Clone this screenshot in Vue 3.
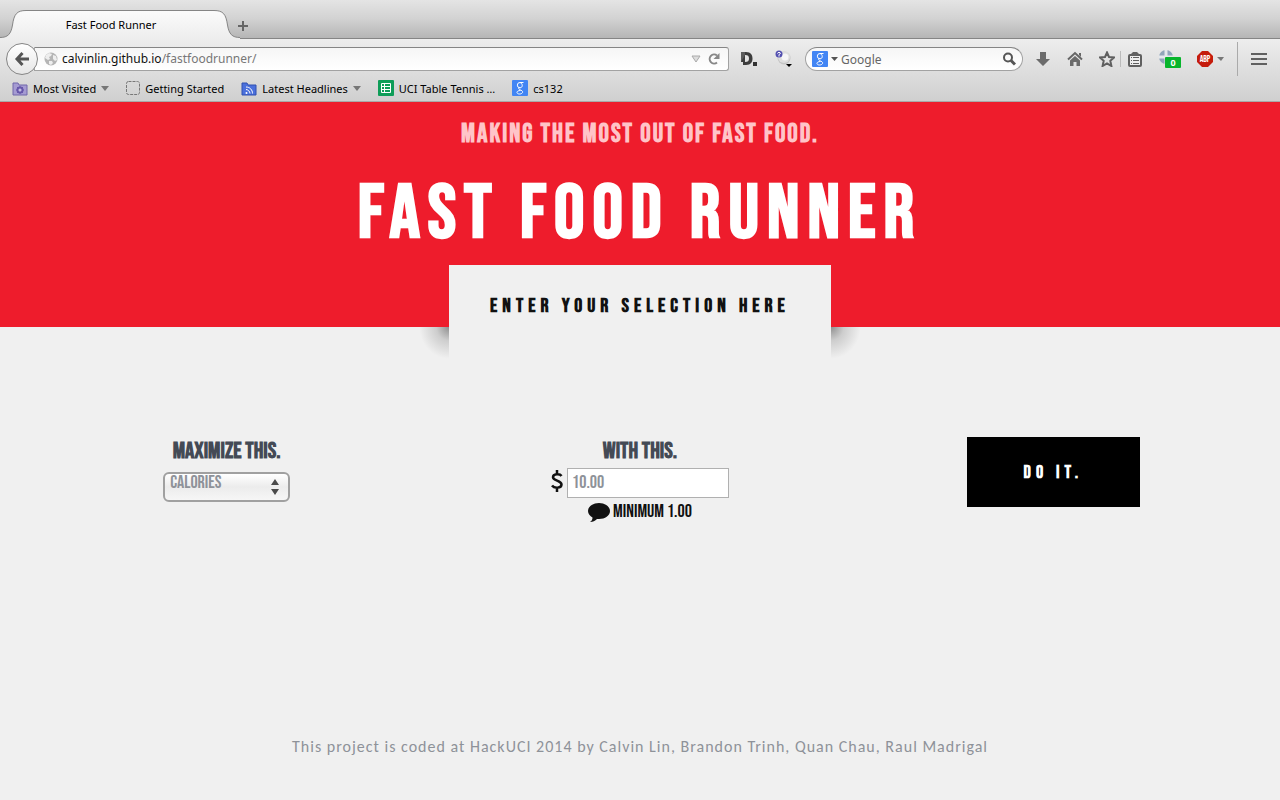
<script setup>
import { ref } from 'vue'

const url = ref('')
const search = ref('')
const nutrient = ref('calories')
const budget = ref('')
</script>

<template>
  <div class="browser">
    <div class="chrome">
      <div class="tabs">
        <a class="tab" href="#">
          <svg class="tab-shape" viewBox="0 0 240 30" width="240" height="30">
            <defs>
              <linearGradient id="tabFill" x1="0" y1="0" x2="0" y2="1">
                <stop offset="0" stop-color="#fbfbfb" />
                <stop offset="1" stop-color="#ededed" />
              </linearGradient>
            </defs>
            <path d="M0 30V28.500C8 28.500 11 25 12.500 16C14 5 17 1.500 26 1.500H214C223 1.500 226 5 227.500 16C229 25 232 28.500 240 28.500V30Z" fill="url(#tabFill)" />
            <path d="M0 28.500C8 28.500 11 25 12.500 16C14 5 17 1.500 26 1.500H214C223 1.500 226 5 227.500 16C229 25 232 28.500 240 28.500" fill="none" stroke="#858585" />
          </svg>
          <span>Fast Food Runner</span>
        </a>
        <button class="icon new-tab" aria-label="New tab">
          <svg width="12" height="12" viewBox="0 0 12 12"><path d="M6 1v10M1 6h10" stroke="#666" stroke-width="2" /></svg>
        </button>
      </div>

      <div class="nav">
        <button class="back" aria-label="Back">
          <svg width="16" height="16" viewBox="0 0 16 16"><path d="M8.500 2L3 8l5.500 6M3 8h12" fill="none" stroke="#555" stroke-width="3" /></svg>
        </button>
        <div class="address">
          <svg width="14" height="14" viewBox="0 0 14 14">
            <circle cx="7" cy="7" r="6.500" fill="#b5b5b5" />
            <path d="M2 3l3-2 3 1-1 2-2 1 1 2-2 1-3-2zM9 3l3 1 1 4-2 1-2-2zM5 9l3 0 1 2-2 2-2-1z" fill="#eee" />
          </svg>
          <label class="address-text">
            <span>calvinlin.github.io<i>/fastfoodrunner/</i></span>
            <input v-model="url" type="text" aria-label="Address">
          </label>
          <svg width="10" height="8" viewBox="0 0 10 8"><path d="M1 1h8L5 7z" fill="#ddd" stroke="#aaa" /></svg>
          <button class="icon" aria-label="Reload">
            <svg width="14" height="14" viewBox="0 0 14 14"><path d="M10 10.500A4.500 4.500 0 1 1 10 3.500" fill="none" stroke="#888" stroke-width="2" /><path d="M12.500 1v6h-6z" fill="#888" /></svg>
          </button>
        </div>
        <button class="icon dashlane" aria-label="Dictionary">
          <svg width="18" height="16" viewBox="0 0 18 16">
            <path fill-rule="evenodd" d="M1 1h5c5 0 6.500 3 6.500 6.500S11 14 6 14H3v-3H1zM5 4v7c3 0 4-1 4-3.500S8 4 5 4z" fill="#3d3d3d" />
            <path d="M1 1h4v3L1 11z" fill="#5c5c5c" /><rect x="13" y="11" width="4" height="4" fill="#333" />
          </svg>
        </button>
        <button class="icon orb" aria-label="Page tools">
          <svg width="18" height="18" viewBox="0 0 18 18">
            <circle cx="9" cy="8" r="6.500" fill="#c4c4c4" /><circle cx="9" cy="7" r="6" fill="#dedede" /><circle cx="10" cy="7" r="3.500" fill="#f6f6f6" />
            <circle cx="4" cy="4" r="3.500" fill="#5350b0" /><path d="M2.500 3.500C2.500 2 5.500 2 5.500 3.500L4 4.500v2" fill="none" stroke="#fff" />
            <path d="M11 14h6l-3 3z" fill="#000" />
          </svg>
        </button>
        <div class="search">
          <svg width="16" height="16" viewBox="0 0 16 16">
            <rect width="16" height="16" rx="1" fill="#4285f4" />
            <path d="M11.500 2.500H8a2.500 2.500 0 1 0 0 5.300c3 0 3-4.500 0-5.300M7.500 7.800c-2 1 0 1.700 1.500 2.400 3 1.300 1.500 3.800-1.500 3.800-3.500 0-3.500-3.500 1-3.500" fill="none" stroke="#fff" />
          </svg>
          <svg width="7" height="5" viewBox="0 0 7 5"><path d="M0 0h7L3.500 4z" fill="#555" /></svg>
          <input v-model="search" type="text" placeholder="Google" aria-label="Search">
          <button class="icon" aria-label="Go">
            <svg width="14" height="14" viewBox="0 0 14 14"><circle cx="6" cy="5.500" r="4" fill="none" stroke="#555" stroke-width="2" /><path d="M9 8.500l4 4" stroke="#555" stroke-width="3" /></svg>
          </button>
        </div>
        <div class="tools">
          <button class="icon" aria-label="Downloads">
            <svg width="16" height="16" viewBox="0 0 16 16"><path d="M5 1h6v7h4l-7 7-7-7h4z" fill="#6b6b6b" /></svg>
          </button>
          <button class="icon" aria-label="Home">
            <svg width="16" height="16" viewBox="0 0 16 16"><path d="M1 8.500L8 2l7 6.500" fill="none" stroke="#666" stroke-width="2" /><path d="M12 2h2v4l-2-2z" fill="#666" /><path d="M3 9.500L8 5l5 4.500V15H9.500v-4h-3v4H3z" fill="#6b6b6b" /></svg>
          </button>
          <button class="icon" aria-label="Bookmark">
            <svg width="16" height="16" viewBox="0 0 16 16"><path d="M8 1.500l2 4.500 5 .5-3.700 3.300L12.400 15 8 12.400 3.600 15l1.100-5.200L1 6.500 6 6z" fill="none" stroke="#606060" stroke-width="2" /></svg>
          </button>
          <button class="icon list" aria-label="Bookmarks menu">
            <svg width="16" height="16" viewBox="0 0 16 16"><rect x="2" y="4" width="12" height="11" rx="1" fill="#eee" stroke="#606060" stroke-width="2" /><path d="M4 3l2-2h4l2 2v1H4z" fill="#606060" /><path d="M4 6.500h1M6 6.500h6M4 9.500h1M6 9.500h6M4 12.500h1M6 12.500h6" stroke="#606060" /></svg>
          </button>
          <button class="icon" aria-label="Blocked items">
            <svg width="22" height="18" viewBox="0 0 22 18"><circle cx="7" cy="7" r="7" fill="#91a5ba" /><path d="M7 0v14M0 7h14" stroke="#e4e8ec" stroke-width="3" /><rect x="6" y="7" width="16" height="11" rx="1" fill="#08b52c" /><text x="14" y="16" fill="#fff" font-size="9" font-weight="700" text-anchor="middle">0</text></svg>
          </button>
          <button class="icon abp" aria-label="Adblock">
            <svg width="28" height="16" viewBox="0 0 28 16"><path d="M5 0h6l5 5v6l-5 5H5l-5-5V5z" fill="#c51c0c" /><text class="abp-text" x="8" y="11" fill="#fff" font-size="9" text-anchor="middle">ABP</text><path d="M20 6h7l-3 4z" fill="#777" /></svg>
          </button>
          <button class="icon menu" aria-label="Menu">
            <svg width="16" height="14" viewBox="0 0 16 14"><path d="M0 2h16M0 7h16M0 12h16" stroke="#606060" stroke-width="2" /></svg>
          </button>
        </div>
      </div>

      <div class="bookmarks">
        <a href="#">
          <svg width="16" height="15" viewBox="0 0 16 15"><path d="M1 2h5l1 2h8v10H1z" fill="#a59bd2" stroke="#7166aa" /><circle cx="8" cy="9" r="2.500" fill="none" stroke="#6757aa" stroke-width="2" /><path d="M8 5v8M4 9h8M5 6l6 6M11 6l-6 6" stroke="#6757aa" /><circle cx="8" cy="9" r="1.500" fill="#c3bce3" /></svg>
          <span>Most Visited</span>
          <svg width="8" height="5" viewBox="0 0 8 5"><path d="M0 0h8L4 5z" fill="#777" /></svg>
        </a>
        <a href="#">
          <svg width="14" height="14" viewBox="0 0 14 14"><rect x=".5" y=".5" width="13" height="13" rx="2" fill="none" stroke="#777" stroke-dasharray="3 1" /></svg>
          <span>Getting Started</span>
        </a>
        <a href="#">
          <svg width="16" height="15" viewBox="0 0 16 15"><path d="M1 2h5l1 2h8v10H1z" fill="#4b70dc" stroke="#3150b0" /><circle cx="5.500" cy="12" r="1" fill="#fff" /><path d="M5 8.500c2 0 4 2 4 4M5 6c4 0 6.500 3 6.500 6.500" fill="none" stroke="#fff" /></svg>
          <span>Latest Headlines</span>
          <svg width="8" height="5" viewBox="0 0 8 5"><path d="M0 0h8L4 5z" fill="#777" /></svg>
        </a>
        <a href="#">
          <svg width="16" height="16" viewBox="0 0 16 16"><rect width="16" height="16" rx="1" fill="#0f9d58" /><path d="M3.500 3.500h9v9h-9zM3.500 6.500h9M3.500 9.500h9M6.500 3.500v9" fill="none" stroke="#fff" /></svg>
          <span>UCI Table Tennis …</span>
        </a>
        <a href="#">
          <svg width="16" height="16" viewBox="0 0 16 16"><rect width="16" height="16" rx="1" fill="#4285f4" /><path d="M11.500 2.500H8a2.500 2.500 0 1 0 0 5.300c3 0 3-4.500 0-5.300M7.500 7.800c-2 1 0 1.700 1.500 2.400 3 1.300 1.500 3.800-1.500 3.800-3.500 0-3.500-3.500 1-3.500" fill="none" stroke="#fff" /></svg>
          <span>cs132</span>
        </a>
      </div>
    </div>

    <header class="hero">
      <p class="tagline">Making the most out of fast food.</p>
      <h1>Fast Food Runner</h1>
      <div class="panel"><h2>Enter your selection here</h2></div>
    </header>

    <form class="order" @submit.prevent>
      <div class="field">
        <label for="nutrient">Maximize this.</label>
        <div class="select">
          <select id="nutrient" v-model="nutrient">
            <option value="calories">CALORIES</option>
          </select>
          <svg width="8" height="16" viewBox="0 0 8 16"><path d="M0 6l4-6 4 6zM0 10h8l-4 6z" fill="#4a4a4a" /></svg>
        </div>
      </div>
      <div class="field">
        <label for="budget">With this.</label>
        <div class="money">
          <svg width="12" height="26" viewBox="0 -2 12 26"><path d="M10.500 6C9 3.500 2 3.500 2 7.200S10.500 10.500 10.500 14.500 3 18.500 1 15.500M6 0v5M6 17v5" fill="none" stroke="#111" stroke-width="2.500" /></svg>
          <input id="budget" v-model="budget" type="text" placeholder="10.00">
        </div>
        <p class="hint">
          <svg width="22" height="19" viewBox="0 0 22 19"><path d="M11 0c6 0 11 3.500 11 8s-5 8-11 8l-2 0c-2 2-4 3-7 3 2-1 2.500-3 2.500-4.500C2 13 0 11 0 8c0-4.500 5-8 11-8z" fill="#111" /></svg>
          <span>Minimum 1.00</span>
        </p>
      </div>
      <div class="field">
        <button class="submit" type="submit">Do it.</button>
      </div>
    </form>

    <footer>This project is coded at HackUCI 2014 by Calvin Lin, Brandon Trinh, Quan Chau, Raul Madrigal</footer>
  </div>
</template>

<style>
body {
  margin: 0;
  background: #f0f0f0;
}
</style>

<style scoped>
.browser {
  font-family: "Bebas Neue", "Roboto Condensed", "Liberation Sans Narrow", sans-serif;
  color: #111;
}

h1,
h2,
p {
  margin: 0;
}

svg {
  flex: none;
  display: block;
}

input,
select,
button {
  font-family: inherit;
  box-sizing: border-box;
}

.chrome {
  font-family: "Noto Sans", sans-serif;
  font-size: 11px;
  border-bottom: 1px solid #a9a9a9;
}

.chrome a {
  color: #000;
  text-decoration: none;
}

.icon {
  display: flex;
  padding: 0;
  border: 0;
  background: none;
}

.tabs {
  display: flex;
  height: 38px;
  align-items: flex-end;
  background: linear-gradient(#e4e4e4, #d2d2d2 50%, #b5b5b5);
  border-bottom: 1px solid #858585;
}

.tab {
  position: relative;
  display: flex;
  justify-content: center;
  width: 222px;
  height: 29px;
  line-height: 32px;
}

.tab-shape {
  position: absolute;
  left: 0;
  top: 0;
}

.tab span {
  position: relative;
}

.new-tab {
  margin: 0 0 6px 15px;
}

.nav {
  display: flex;
  align-items: center;
  height: 40px;
  padding: 0 13px 0 6px;
  background: linear-gradient(#ededed, #dadada);
}

.back {
  display: flex;
  align-items: center;
  justify-content: center;
  width: 32px;
  height: 32px;
  padding: 0;
  border: 1px solid #858585;
  border-radius: 50%;
  background: linear-gradient(#fff, #e6e6e6);
  position: relative;
}

.address,
.search {
  display: flex;
  align-items: center;
  height: 24px;
  box-sizing: border-box;
  border: 1px solid #a2a2a2;
  border-top-color: #858585;
  background: linear-gradient(#f6f6f6, #fff);
}

.address {
  flex: 1;
  gap: 6px;
  margin-left: -4px;
  padding: 0 7px 0 9px;
  border-radius: 0 3px 3px 0;
}

.address-text {
  display: flex;
  flex: 1;
  margin-left: -2px;
  font-size: 12px;
  line-height: 20px;
}

.address-text i {
  color: #777;
  font-style: normal;
}

.address-text input {
  flex: 1;
  min-width: 0;
  padding: 0;
  border: 0;
  background: none;
}

.dashlane {
  margin-left: 11px;
}

.orb {
  margin-left: 17px;
}

.search {
  width: 218px;
  gap: 3px;
  margin-left: 12px;
  padding: 0 6px;
  border-radius: 12px;
}

.search input {
  flex: 1;
  min-width: 0;
  padding: 0;
  border: 0;
  background: none;
  font-size: 12px;
}

.search input::placeholder {
  color: #666;
  opacity: 1;
}

.tools {
  display: flex;
  align-items: center;
  gap: 16px;
  margin-left: 12px;
}

.list {
  margin-left: -11px;
  padding-left: 6px;
  border-left: 1px solid #bbb;
}

.abp {
  margin-right: -4px;
}

.abp-text {
  font-family: "Bebas Neue", "Liberation Sans Narrow", sans-serif;
}

.menu {
  padding: 10px 0 10px 13px;
  border-left: 1px solid #aaa;
}

.bookmarks {
  display: flex;
  align-items: center;
  gap: 17px;
  height: 18px;
  padding: 0 12px 4px;
  background: linear-gradient(#dadada, #cfcfcf);
}

.bookmarks a {
  display: flex;
  align-items: center;
  gap: 5px;
}

.hero {
  display: flex;
  flex-direction: column;
  align-items: center;
  height: 225px;
  background: #ee1c2c;
  text-transform: uppercase;
}

.tagline {
  padding-top: 17px;
  color: #ffc4c8;
  font-size: 26px;
  font-weight: 700;
  line-height: 32px;
  letter-spacing: 2px;
}

h1 {
  padding-top: 16px;
  color: #fff;
  font-size: 76px;
  line-height: 96px;
  letter-spacing: 8px;
}

.panel {
  position: relative;
  width: 382px;
  margin-top: 2px;
  background: #f0f0f0;
  text-align: center;
}

.panel::before,
.panel::after {
  content: "";
  position: absolute;
  top: 62px;
  width: 30px;
  height: 32px;
}

.panel::before {
  right: 100%;
  background: radial-gradient(ellipse at 100% 0, #8f8f8f, #cdcdcd 30%, #f0f0f0 70%);
}

.panel::after {
  left: 100%;
  background: radial-gradient(ellipse at 0 0, #8f8f8f, #cdcdcd 30%, #f0f0f0 70%);
}

h2 {
  padding: 25px 0 43px;
  font-size: 20px;
  line-height: 32px;
  letter-spacing: 5px;
}

.order {
  display: grid;
  grid-template-columns: repeat(3, 1fr);
  padding: 110px 20px 0;
}

.field {
  display: flex;
  flex-direction: column;
  align-items: center;
  text-transform: uppercase;
}

.field label {
  padding-bottom: 3px;
  color: #444a55;
  font-size: 23px;
  font-weight: 700;
  line-height: 28px;
}

.select {
  position: relative;
  margin-top: 4px;
}

.select svg {
  position: absolute;
  right: 11px;
  top: 7px;
  pointer-events: none;
}

select {
  display: block;
  appearance: none;
  width: 127px;
  height: 30px;
  padding: 0 5px 10px;
  border: 2px solid #a0a0a0;
  border-radius: 6px;
  background: linear-gradient(#fff, #ececec 50%, #f6f6f6);
  color: #8e9299;
  font-size: 18px;
  line-height: 18px;
}

.money {
  display: flex;
  gap: 4px;
}

.money input {
  width: 162px;
  height: 30px;
  padding: 0 4px 2px;
  border: 1px solid #b0b0b0;
  background: #fff;
  font-size: 18px;
}

.money input::placeholder {
  color: #8e9299;
  opacity: 1;
}

.hint {
  display: flex;
  align-items: center;
  gap: 3px;
  font-size: 18px;
  line-height: 28px;
}

.submit {
  width: 173px;
  height: 70px;
  border: 0;
  background: #000;
  color: #fff;
  font-size: 18px;
  font-weight: 700;
  letter-spacing: 5px;
  text-transform: uppercase;
}

footer {
  padding: 209px 20px 40px;
  color: #8e9299;
  font-family: Carlito, Lato, sans-serif;
  font-size: 16px;
  line-height: 24px;
  letter-spacing: 1px;
  text-align: center;
}
</style>
